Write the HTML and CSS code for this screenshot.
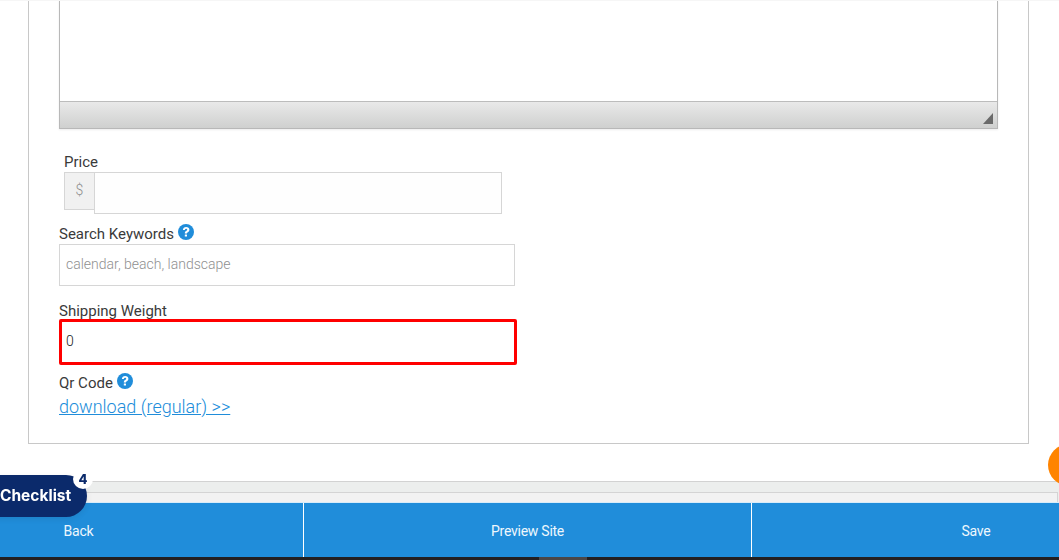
FILE: index.html
```html
<!DOCTYPE html>
<html lang="en">
<head>
<meta charset="utf-8">
<title>Product</title>
<link rel="stylesheet" href="styles.css">
</head>
<body>
<div class="page">
  <div class="top-line"></div>
  <main class="main">
    <section class="card">
      <div class="editor">
        <div class="editor-body"></div>
        <div class="editor-foot"><span class="grip"></span></div>
      </div>
      <div class="field field-price">
        <label class="label">Price</label>
        <div class="input-group">
          <span class="addon">$</span>
          <div class="input input-price"></div>
        </div>
      </div>
      <div class="field field-keywords">
        <label class="label">Search Keywords
          <svg class="help" viewBox="0 0 16 16"><circle cx="8" cy="8" r="8" fill="#208dda"/><path d="M4.900 6.100C5 4.300 6.300 3.100 8.200 3.100c1.800 0 3.200 1.100 3.200 2.700 0 1.100-.6 1.800-1.500 2.400-.7.5-.9.7-.9 1.400H6.800c0-1.300.3-1.900 1.200-2.500.8-.5 1.200-.8 1.200-1.300 0-.6-.5-1-1.100-1-.7 0-1.100.4-1.300 1.100z" fill="#fff"/><rect x="6.800" y="10.400" width="2.200" height="2.200" rx=".3" fill="#fff"/></svg>
        </label>
        <div class="input input-wide placeholder">calendar, beach, landscape</div>
      </div>
      <div class="field field-weight">
        <label class="label">Shipping Weight</label>
        <div class="input input-error">0</div>
      </div>
      <div class="field field-qr">
        <label class="label">Qr Code
          <svg class="help" viewBox="0 0 16 16"><circle cx="8" cy="8" r="8" fill="#208dda"/><path d="M4.900 6.100C5 4.300 6.300 3.100 8.200 3.100c1.800 0 3.200 1.100 3.200 2.700 0 1.100-.6 1.800-1.500 2.400-.7.5-.9.7-.9 1.400H6.800c0-1.300.3-1.900 1.200-2.500.8-.5 1.200-.8 1.200-1.300 0-.6-.5-1-1.100-1-.7 0-1.100.4-1.300 1.100z" fill="#fff"/><rect x="6.800" y="10.400" width="2.200" height="2.200" rx=".3" fill="#fff"/></svg>
        </label>
        <a class="link" href="#">download (regular) &gt;&gt;</a>
      </div>
    </section>
  </main>
  <div class="strip"><div class="strip-inner"></div></div>
  <nav class="actions">
    <a class="action action-back" href="#">Back</a>
    <a class="action action-preview" href="#">Preview Site</a>
    <a class="action action-save" href="#">Save</a>
  </nav>
  <div class="taskbar"><span class="taskbar-thumb"></span></div>
</div>
<div class="checklist">Checklist<span class="badge">4</span></div>
<div class="orange"></div>
</body>
</html>
```
FILE: styles.css
```css
* { box-sizing: border-box; }
html, body { margin: 0; padding: 0; height: 100%; overflow: hidden; background: #fff; }
body { font-family: Roboto, "Liberation Sans", sans-serif; font-size: 15px; font-weight: 400; color: #3a3a3a; }
.page { height: 560px; display: flex; flex-direction: column; position: relative; }
.top-line { height: 1px; background: #f6f6f6; flex: none; margin-bottom: -1px; position: relative; z-index: 1; }
.main { flex: none; height: 481px; padding: 0 30px 0 28px; }
.card { height: 444px; border: 1px solid #c8c8c8; border-top: 0; padding: 0 30px; }
.editor { width: 939px; height: 129px; border: 1px solid #b8b8b8; border-top: 0; display: flex; flex-direction: column; box-shadow: 0 1px 2px rgba(0,0,0,.08); }
.editor-body { height: 102px; background: #fff; border-bottom: 1px solid #bcbcbc; flex: none; }
.editor-foot { flex: 1; background: linear-gradient(#e9e9e9, #cfd0cf); display: flex; justify-content: flex-end; align-items: flex-end; padding: 0 4px 4px 0; }
.grip { width: 0; height: 0; border-style: solid; border-width: 0 0 11px 10px; border-color: transparent transparent #6a6a6a transparent; }
.label { display: block; height: 20px; line-height: 20px; white-space: nowrap; }
.field-price { margin-top: 23px; padding-left: 5px; }
.input-group { display: flex; align-items: flex-start; }
.addon { width: 31px; height: 38px; background: #f1f1f1; border: 1px solid #d6d6d6; color: #8d8d8d; font-size: 14px; font-weight: 300; text-align: center; line-height: 34px; flex: none; }
.input { border: 1px solid #d6d6d6; background: #fff; }
.input-price { width: 408px; height: 42px; margin-left: -1px; background: #fefefe; }
.input-wide, .input-error { font-size: 14px; font-weight: 300; }
.field-keywords { margin-top: 9px; }
.field-keywords .label { height: 21px; line-height: 22px; }
.input-wide { width: 456px; height: 42px; line-height: 38px; padding-left: 6px; color: #909090; }
.field-weight { margin-top: 15px; }
.field-weight .label { height: 18px; line-height: 21px; }
.input-error { width: 458px; height: 46px; border: 3px solid #f00; border-radius: 2px; line-height: 38px; padding-left: 4px; color: #222; }
.field-qr { margin-top: 8px; }
.help { width: 16px; height: 16px; vertical-align: -1px; }
.link { display: block; margin-top: 1px; font-size: 18px; font-weight: 300; line-height: 25px; color: #208dda; text-decoration: underline; }
.strip { flex: none; height: 21px; background: #eceeed; border-top: 1px solid #d2d2d2; padding-top: 10px; }
.strip-inner { height: 10px; background: #f2f2f2; border-top: 1px solid #d4d4d4; border-right: 1px solid #d4d4d4; margin-right: 1px; }
.actions { flex: none; height: 55px; display: flex; background: #208dda; border-top: 1px solid #d9ecf9; }
.action { color: #eef7fd; text-decoration: none; text-align: center; font-size: 14px; font-weight: 400; letter-spacing: -.25px; line-height: 56px; flex: none; }
.action-back { width: 304px; border-right: 1px solid #fff; padding-right: 146px; }
.action-preview { width: 448px; border-right: 1px solid #fff; }
.action-save { flex: 1; padding-left: 141px; }
.taskbar { flex: 1; background: #231f20; display: flex; justify-content: center; }
.taskbar-thumb { width: 48px; height: 3px; background: #4b4747; margin-left: 67px; }
.checklist { position: fixed; left: -32px; top: 475px; width: 119px; height: 42px; border-radius: 0 21px 21px 0; background: #0b2a6b; color: #fff; font-family: Inter, Roboto, sans-serif; font-weight: 700; font-size: 15.500px; line-height: 41px; padding-left: 32px; box-shadow: 0 2px 6px rgba(0,0,0,.08); }
.badge { position: absolute; right: -6px; top: -6px; width: 20px; height: 20px; border-radius: 50%; background: #fff; color: #0b2a6b; font-size: 13px; font-weight: 800; text-align: center; line-height: 20px; }
.orange { position: fixed; left: 1048px; top: 444px; width: 42px; height: 42px; border-radius: 50%; background: #ff8400; }
```
